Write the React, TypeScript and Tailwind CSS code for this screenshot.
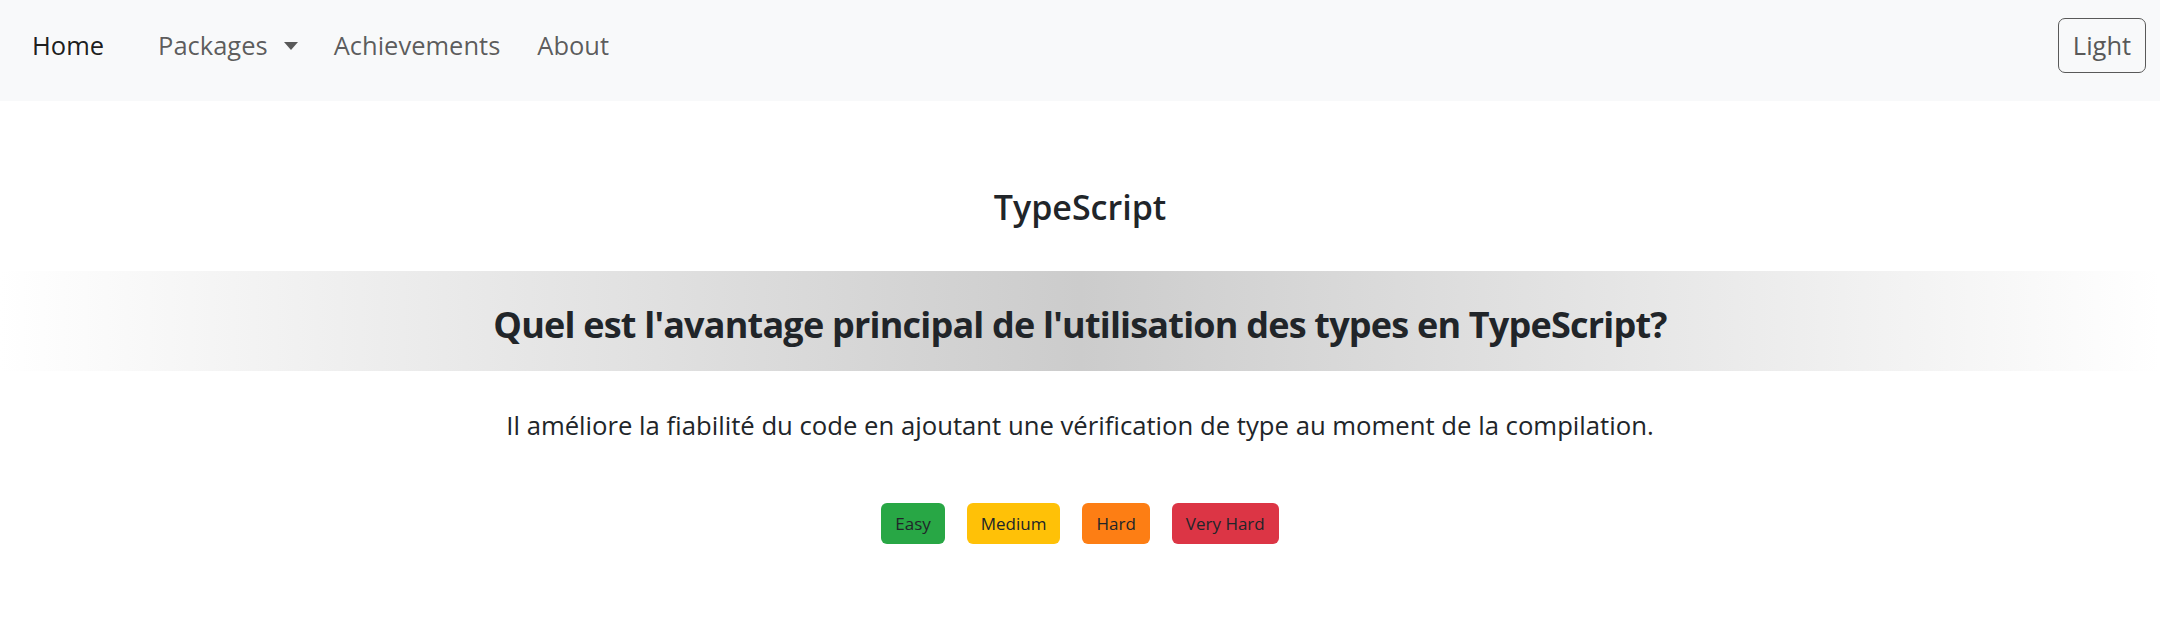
import React from 'react';

const levels = [
  { label: 'Easy', className: 'bg-[#28a745]' },
  { label: 'Medium', className: 'bg-[#ffc107]' },
  { label: 'Hard', className: 'bg-[#fd7e14]' },
  { label: 'Very Hard', className: 'bg-[#dc3545]' },
];

function Navbar() {
  return (
    <nav className="flex h-[101px] items-center justify-between bg-[#f8f9fa] pb-[10px] pl-[32px] pr-[14px]">
      <div className="flex items-center text-[25.5px]">
        <a href="#" className="mr-[54px] text-black/90">
          Home
        </a>
        <button className="mr-[36px] flex items-center text-black/65">
          Packages
          <span className="ml-[16px] h-0 w-0 border-x-[7.5px] border-t-[8px] border-x-transparent border-t-[#595959]" />
        </button>
        <a href="#" className="mr-[37px] text-black/65">
          Achievements
        </a>
        <a href="#" className="text-black/65">
          About
        </a>
      </div>
      <button className="flex h-[55px] w-[88px] items-center justify-center rounded-[7px] border border-[#595959] text-[25.5px] text-[#595959]">
        Light
      </button>
    </nav>
  );
}

export default function App() {
  return (
    <div className="min-h-screen bg-white font-['Open_Sans',sans-serif] text-[#212529]">
      <Navbar />
      <main className="flex flex-col items-center">
        <h2 className="mt-[86px] text-[34px] font-semibold leading-[1.2]">TypeScript</h2>
        <div className="mt-[43px] flex h-[100px] w-full items-center justify-center bg-[linear-gradient(to_right,#ffffff,#cccccc,#ffffff)] pt-[8px]">
          <h3 className="text-[36px] font-bold leading-[1.2] tracking-[-0.8px]">
            Quel est l'avantage principal de l'utilisation des types en TypeScript?
          </h3>
        </div>
        <p className="mt-[36px] text-[25.7px] leading-[1.5]">
          Il améliore la fiabilité du code en ajoutant une vérification de type au moment de la compilation.
        </p>
        <div className="mt-[58px] flex gap-[22px]">
          {levels.map((level) => (
            <button
              key={level.label}
              className={`h-[41px] rounded-[6px] px-[14px] text-[17px] text-[#212529] ${level.className}`}
            >
              {level.label}
            </button>
          ))}
        </div>
      </main>
    </div>
  );
}
